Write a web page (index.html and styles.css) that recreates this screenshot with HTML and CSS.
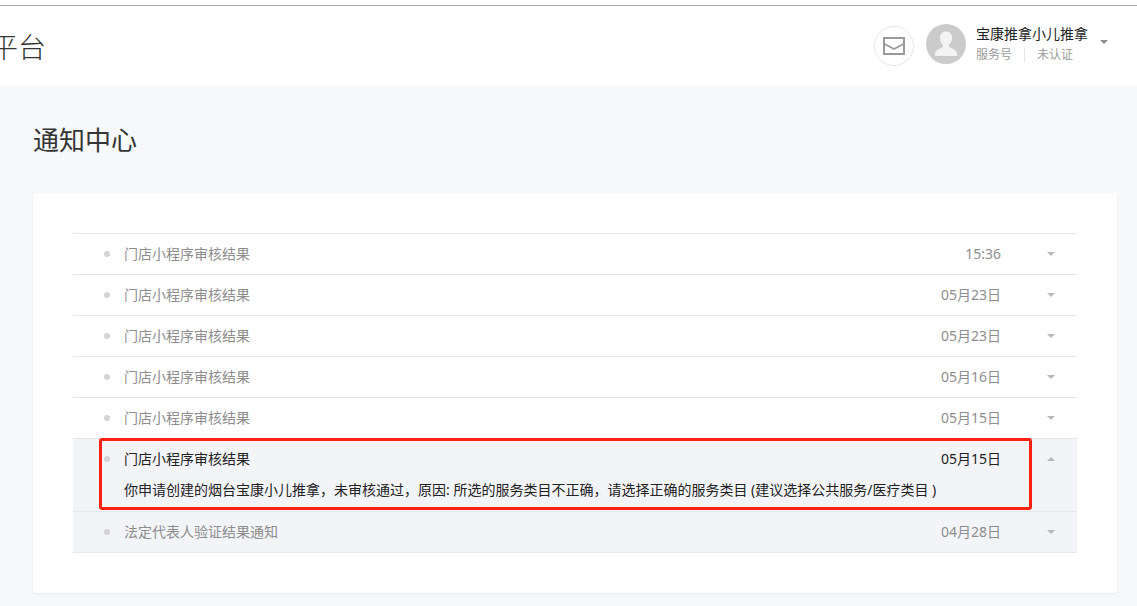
FILE: index.html
```html
<!DOCTYPE html>
<html lang="zh-CN">
<head>
<meta charset="utf-8">
<title>通知中心</title>
<link rel="stylesheet" href="styles.css">
</head>
<body>
<header class="header">
  <div class="brand"><span class="brand-name">平台</span></div>
  <div class="account">
    <button class="mail" type="button" aria-label="通知">
      <svg width="22" height="18" viewBox="0 0 22 18" fill="none" stroke="#9a9a9a" stroke-width="2"><path d="M1 1H21V17H1Z"/><path d="M1.500 7L11 12L20.500 7" stroke-width="1.800"/></svg>
    </button>
    <svg class="avatar" width="40" height="40" viewBox="0 0 40 40"><circle cx="20" cy="20" r="20" fill="#cbcbcb"/><path fill="#f3f3f3" d="M20 7.500C16.300 7.500 14 10.200 14 14C14 16.800 15.200 19.300 17 20.700V22.500C16.700 24 9 25 9 29.500V32H31V29.500C31 25 23.300 24 23 22.500V20.700C24.800 19.300 26 16.800 26 14C26 10.200 23.700 7.500 20 7.500Z"/></svg>
    <div class="profile">
      <div class="profile-name">宝康推拿小儿推拿</div>
      <div class="profile-meta"><span>服务号</span><span class="profile-status">未认证</span></div>
    </div>
    <button class="menu-toggle" type="button" aria-label="账号菜单"><span class="arrow arrow-dark"></span></button>
  </div>
</header>
<main class="main">
  <h1 class="page-title">通知中心</h1>
  <section class="card">
    <ul class="notices">
      <li class="notice"><button class="notice-row" type="button" aria-expanded="false"><span class="dot"></span><span class="notice-title">门店小程序审核结果</span><span class="notice-date">15:36</span><span class="arrow"></span></button></li>
      <li class="notice"><button class="notice-row" type="button" aria-expanded="false"><span class="dot"></span><span class="notice-title">门店小程序审核结果</span><span class="notice-date">05月23日</span><span class="arrow"></span></button></li>
      <li class="notice"><button class="notice-row" type="button" aria-expanded="false"><span class="dot"></span><span class="notice-title">门店小程序审核结果</span><span class="notice-date">05月23日</span><span class="arrow"></span></button></li>
      <li class="notice"><button class="notice-row" type="button" aria-expanded="false"><span class="dot"></span><span class="notice-title">门店小程序审核结果</span><span class="notice-date">05月16日</span><span class="arrow"></span></button></li>
      <li class="notice"><button class="notice-row" type="button" aria-expanded="false"><span class="dot"></span><span class="notice-title">门店小程序审核结果</span><span class="notice-date">05月15日</span><span class="arrow"></span></button></li>
      <li class="notice notice-shaded notice-open">
        <button class="notice-row" type="button" aria-expanded="true"><span class="dot"></span><span class="notice-title">门店小程序审核结果</span><span class="notice-date">05月15日</span><span class="arrow arrow-up"></span></button>
        <p class="notice-text">你申请创建的烟台宝康小儿推拿，未审核通过，原因: 所选的服务类目不正确，请选择正确的服务类目 (建议选择公共服务/医疗类目 )</p>
        <div class="highlight"></div>
      </li>
      <li class="notice notice-shaded"><button class="notice-row" type="button" aria-expanded="false"><span class="dot"></span><span class="notice-title">法定代表人验证结果通知</span><span class="notice-date">04月28日</span><span class="arrow"></span></button></li>
    </ul>
  </section>
</main>
</body>
</html>
```
FILE: styles.css
```css
* { box-sizing: border-box; }

body {
  margin: 0;
  padding-top: 5px;
  background: #fff;
  color: #353535;
  font: 14px/20px "Noto Sans", "Noto Sans CJK SC", sans-serif;
}

button {
  padding: 0;
  border: 0;
  background: none;
  color: inherit;
  font: inherit;
  cursor: pointer;
}

.header {
  display: flex;
  align-items: center;
  justify-content: space-between;
  height: 81px;
  padding-right: 29px;
  border-top: 1px solid #adadad;
  background: #fff;
}

.brand {
  display: flex;
  justify-content: flex-end;
  width: 46px;
  overflow: hidden;
}

.brand-name {
  flex: none;
  color: #333;
  font-size: 28px;
  font-weight: 300;
  font-family: "Noto Sans CJK SC", sans-serif;
  line-height: 40px;
}

.account {
  display: flex;
  align-items: center;
}

.mail {
  display: flex;
  align-items: center;
  justify-content: center;
  width: 40px;
  height: 40px;
  margin-right: 12px;
  border: 1px solid #e4e6e8;
  border-radius: 50%;
}

.avatar { margin: 0 10px 4px 0; }

.profile-name {
  color: #222;
  line-height: 20px;
}

.profile { padding-bottom: 2px; }

.profile-meta {
  display: flex;
  align-items: center;
  color: #9a9a9a;
  font-size: 12px;
  line-height: 22px;
}

.profile-status {
  margin-left: 12px;
  padding-left: 12px;
  border-left: 1px solid #e7e7eb;
  line-height: 14px;
}

.menu-toggle {
  display: flex;
  margin: 0 0 8px 12px;
}

.arrow {
  flex: none;
  width: 8px;
  height: 4px;
  background: #b8b8b8;
  clip-path: polygon(0 0, 100% 0, 50% 100%);
}

.arrow-up { clip-path: polygon(50% 0, 100% 100%, 0 100%); }

.arrow-dark { background: #8c8c8c; }

.main {
  padding: 34px 20px 13px 33px;
  background: #f6f8f9;
}

.page-title {
  margin: 0 0 33px;
  color: #353535;
  font-size: 26px;
  font-weight: 400;
  line-height: 40px;
}

.card {
  padding: 40px;
  border-radius: 3px;
  background: #fff;
  box-shadow: 0 1px 3px rgba(0, 0, 0, 0.06);
}

.notices {
  margin: 0;
  padding: 0;
  border-top: 1px solid #e7e7eb;
  list-style: none;
}

.notice {
  position: relative;
  border-bottom: 1px solid #e7e7eb;
  color: #8d8d8d;
}

.notice-shaded { background: #f3f4f8; }

.notice-open { color: #222; }

.notice-row {
  display: flex;
  align-items: center;
  gap: 14px;
  width: 100%;
  height: 40px;
  padding: 0 22px 0 31px;
  text-align: left;
}

.dot {
  width: 6px;
  height: 6px;
  border-radius: 50%;
  background: #d4d4d6;
}

.notice-title { flex: 1; }

.notice-date { margin-right: 32px; }

.notice-text {
  margin: 0;
  padding: 1px 77px 11px 51px;
  color: #222;
}

/* Frame drawn over the rejected review notice */
.highlight {
  position: absolute;
  top: -1px;
  right: 45px;
  bottom: 1px;
  left: 26px;
  border: 3px solid #ff2015;
  border-radius: 3px;
  pointer-events: none;
}
```
